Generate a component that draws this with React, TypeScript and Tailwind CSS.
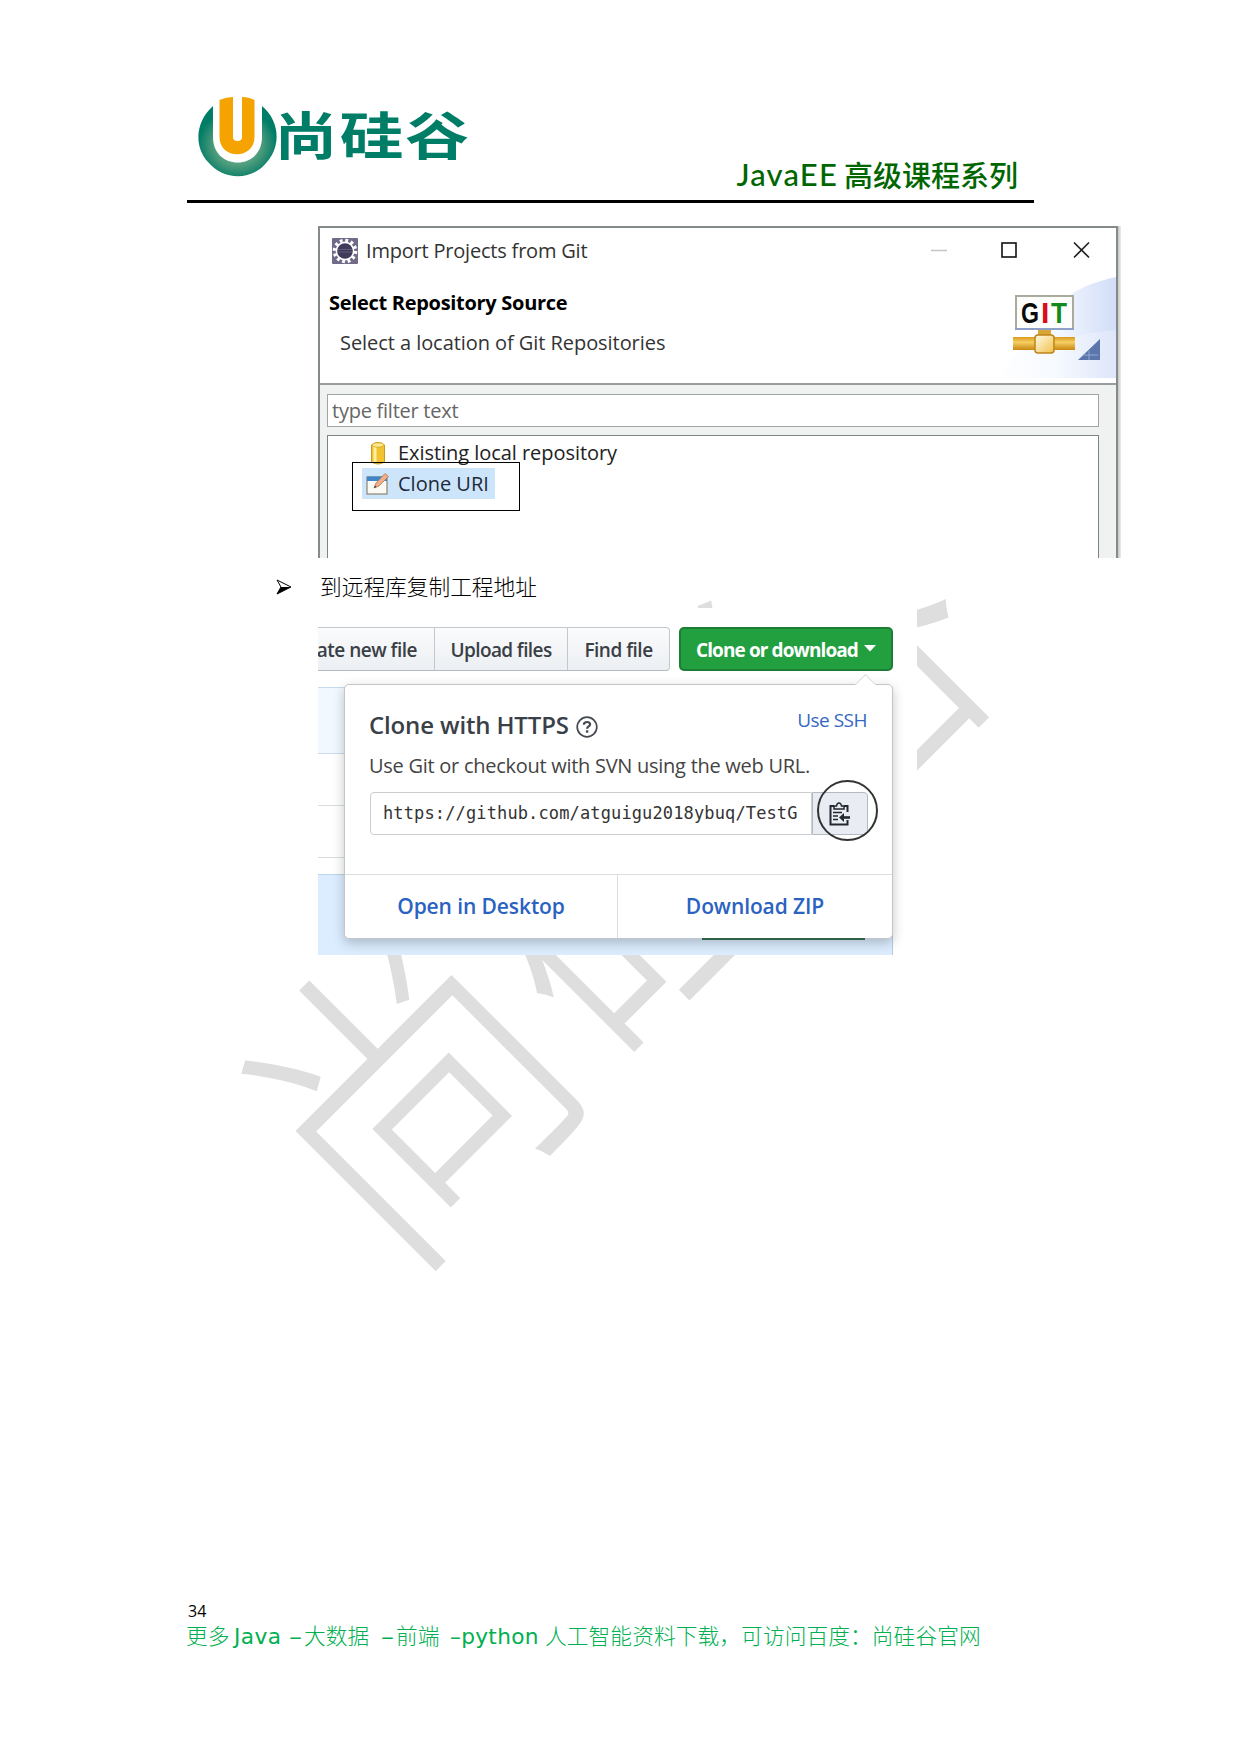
import type { ReactNode } from "react";

function Logo() {
  return (
    <div className="flex items-start">
      <svg className="h-[80px] w-[80px] shrink-0" viewBox="0 0 80 80">
        <defs>
          <radialGradient id="ring" cx="50%" cy="55%" r="50%">
            <stop offset="0.5" stopColor="#5da583" />
            <stop offset="0.7" stopColor="#3d9477" />
            <stop offset="1" stopColor="#007d67" />
          </radialGradient>
        </defs>
        <path
          d="M15 9 C-3 25 -4 50 10 65 C26 84 54 84 69 65 C83 49 82 24 64 9 V40 C64 74 15 74 15 40 Z"
          fill="url(#ring)"
        />
        <path
          d="M21.500 3 Q28 0 35 0 V40 Q35 44 39.500 44 Q44 44 44 40 V0 Q51 0 56.500 3 V40 C56.500 63 21.500 63 21.500 40 Z"
          fill="#f5a300"
        />
      </svg>
      <span className="-ml-[4px] -mt-[4px] origin-left scale-x-[1.25] whitespace-nowrap font-['Noto_Sans_CJK_SC',sans-serif] text-[51px] font-bold leading-[80px] tracking-[1.5px] text-[#007d67]">
        尚硅谷
      </span>
    </div>
  );
}

function EclipseIcon() {
  return (
    <svg className="h-[26px] w-[26px] shrink-0" viewBox="0 0 26 26">
      <rect width="26" height="26" rx="1" fill="#716a88" />
      <circle cx="13" cy="13" r="10.300" fill="none" stroke="#fff" strokeWidth="4" strokeDasharray="2.700 2.693" />
      <circle cx="13" cy="13" r="9.400" fill="#fff" />
      <circle cx="13" cy="13" r="7.800" fill="#403b5a" />
      <path d="M6 11.500h14M5.800 14h14.400" stroke="#625b7c" strokeWidth="1" />
    </svg>
  );
}

function GitBanner() {
  return (
    <svg className="h-[104px] w-[118px]" viewBox="0 0 118 104">
      <defs>
        <linearGradient id="sky" x1="0" y1="0" x2="1" y2="0">
          <stop offset="0" stopColor="#fff" />
          <stop offset="0.500" stopColor="#f3f7fe" />
          <stop offset="1" stopColor="#d2def8" />
        </linearGradient>
        <linearGradient id="pipe" x1="0" y1="0" x2="0" y2="1">
          <stop offset="0" stopColor="#d99a1e" />
          <stop offset="0.400" stopColor="#f6cf63" />
          <stop offset="1" stopColor="#c98712" />
        </linearGradient>
        <linearGradient id="knob" x1="0" y1="0" x2="1" y2="1">
          <stop offset="0" stopColor="#fffbe8" />
          <stop offset="1" stopColor="#f0c04a" />
        </linearGradient>
      </defs>
      <path d="M118 2 C82 10 62 22 56 42 L0 98 V103 H118 Z" fill="url(#sky)" />
      <path d="M118 55 C90 58 55 62 0 86 V103 H118 Z" fill="#fff" opacity="0.250" />
      <g transform="translate(1 -3)">
        <rect x="17" y="24" width="57" height="33" fill="#fdfefc" stroke="#a9ab9d" strokeWidth="2" />
        <path d="M16 57h59" stroke="#8ea0c8" strokeWidth="2" />
        <text x="22" y="51" className="font-['Liberation_Sans'] text-[30px] font-bold" textLength="18" lengthAdjust="spacingAndGlyphs" fill="#0a0a0a">G</text>
        <text x="42" y="51" className="font-['Liberation_Sans'] text-[30px] font-bold" fill="#d90d1e">I</text>
        <text x="52" y="51" className="font-['Liberation_Sans'] text-[30px] font-bold" textLength="16" lengthAdjust="spacingAndGlyphs" fill="#118a1b">T</text>
        <rect x="39" y="58" width="13" height="6" fill="#d9a535" />
        <rect x="14" y="65" width="62" height="13" fill="url(#pipe)" />
        <rect x="36" y="63" width="19" height="18" rx="3" fill="url(#knob)" stroke="#bd8418" strokeWidth="1.500" />
        <path d="M79 88 L101 67 V88 Z" fill="#5a76ad" />
        <path d="M90 88 V79M84 83h15" stroke="#93a8d0" strokeWidth="1" />
      </g>
    </svg>
  );
}

function RepoIcon() {
  return (
    <svg className="h-[24px] w-[16px]" viewBox="0 0 16 24">
      <path d="M1.500 4 Q8 -1 14.500 4 V21 Q8 25 1.500 21 Z" fill="#f2c230" stroke="#c99a1c" />
      <path d="M5 5v17" stroke="#fff0a0" strokeWidth="3" />
      <ellipse cx="8" cy="4" rx="6" ry="2.200" fill="#ffe88a" stroke="#d0a126" strokeWidth="0.800" />
    </svg>
  );
}

function CloneIcon() {
  return (
    <svg className="h-[24px] w-[24px]" viewBox="0 0 24 24">
      <rect x="1" y="5" width="20" height="17" fill="#fbfaf5" stroke="#8a8672" strokeWidth="1.200" />
      <rect x="1" y="4.500" width="20" height="4.500" fill="#3f86c8" />
      <path d="M8 16 L10 11 L19 1.500 L22.500 4.500 L13 14 Z" fill="#eeb08a" stroke="#b8744c" strokeWidth="0.800" />
      <path d="M8 16l1-2.500 1.700 1.500z" fill="#444" />
    </svg>
  );
}

function ImportDialog() {
  return (
    <div className="ml-[318px] h-[332px] w-[803px] overflow-hidden bg-white font-['Open_Sans',sans-serif] text-[#333]">
      <div className="flex h-[332px]">
        <div className="relative w-[800px] border-x-2 border-t-2 border-[#858a8b] bg-[#f0f1f1]">
          <div className="relative h-[157px] border-b-2 border-[#999d9e] bg-white">
            <div className="absolute bottom-[4px] right-0">
              <GitBanner />
            </div>
            <div className="flex h-[45px] items-center pl-[12px]">
              <EclipseIcon />
              <span className="ml-[8px] text-[20px] tracking-[-0.2px]">Import Projects from Git</span>
              <svg className="absolute right-[26px] top-[13px] h-[18px] w-[160px]" viewBox="0 0 160 18">
                <path d="M1 9.500h16" stroke="#c4c4c4" strokeWidth="1.500" />
                <rect x="72" y="2" width="14" height="14" fill="none" stroke="#111" strokeWidth="1.600" />
                <path d="M144 1.500l15 15m0-15l-15 15" stroke="#222" strokeWidth="1.700" />
              </svg>
            </div>
            <div className="pl-[9px] pt-[15px] text-[20px] font-bold leading-[30px] tracking-[-0.3px] text-black">
              Select Repository Source
            </div>
            <div className="pl-[20px] pt-[10px] text-[20px] leading-[30px] tracking-[-0.06px]">
              Select a location of Git Repositories
            </div>
          </div>
          <div className="ml-[7px] mt-[9px] flex h-[33px] w-[772px] items-center border-[1.5px] border-[#a0a4a5] bg-white pl-[4px] text-[20px] tracking-[-0.25px] text-[#666]">
            type filter text
          </div>
          <div className="relative ml-[7px] mt-[8px] h-[130px] w-[772px] border-[1.5px] border-[#7d8284] bg-white pt-[1px]">
            <div className="flex h-[31px] items-center pl-[42px]">
              <RepoIcon />
              <span className="ml-[12px] text-[20px] tracking-[-0.05px] text-[#222]">Existing local repository</span>
            </div>
            <div className="ml-[34px] flex h-[31px] w-[133px] items-center bg-[#cde5fb] pl-[4px]">
              <CloneIcon />
              <span className="ml-[8px] text-[20px] text-[#1e2a38]">Clone URI</span>
            </div>
            <div className="absolute left-[24px] top-[26px] h-[49px] w-[168px] border-[1.5px] border-black" />
          </div>
        </div>
        <div className="w-[3px] bg-gradient-to-r from-[#c4c6c6] to-[#ececec]" />
      </div>
    </div>
  );
}

function ToolButton({ children, className }: { children: ReactNode; className: string }) {
  return (
    <div
      className={
        "flex h-[44px] items-center justify-center overflow-hidden whitespace-nowrap border-y border-r border-[#c5c8cb] border-b-[#b5b9bd] bg-gradient-to-b from-[#fafbfc] to-[#eceff3] pt-[2px] text-[19px] font-semibold text-[#3a3f45] " +
        className
      }
    >
      {children}
    </div>
  );
}

function ClonePanel() {
  return (
    <div className="ml-[318px] h-[347px] w-[599px] bg-white pt-[19px] font-['Open_Sans',sans-serif]">
      <div className="flex w-[575px]">
        <ToolButton className="w-[117px] justify-end pr-[17px] tracking-[-0.5px]">ate new file</ToolButton>
        <ToolButton className="w-[133px] tracking-[-0.6px]">Upload files</ToolButton>
        <ToolButton className="w-[102px] rounded-r-[4px] tracking-[-0.5px]">Find file</ToolButton>
        <div className="ml-[9px] flex h-[44px] w-[214px] items-center rounded-[5px] border-2 border-[#1d7d35] bg-[#22a03f] pl-[15px] pt-[2px] text-[19px] font-bold tracking-[-0.9px] text-white">
          Clone or download
          <svg className="-mt-[3px] ml-[6px] h-[7px] w-[12px]" viewBox="0 0 12 7">
            <path d="M0 0h12l-6 6.500z" fill="#fff" />
          </svg>
        </div>
      </div>
      <div className="relative mt-[16px] h-[268px] w-[575px] overflow-hidden border-r border-[#b9cbdc]">
        <div className="h-[67px] border-y border-[#c8dcf0] bg-[#f1f8ff]" />
        <div className="h-[52px] border-b border-[#d9dcdf]" />
        <div className="h-[52px] border-b border-[#d9dcdf]" />
        <div className="mt-[16px] h-[81px] border-t border-[#bcd3e8] bg-[#dbedff]" />
      </div>
      <div className="relative -mt-[271px] ml-[26px] h-[255px] w-[549px] rounded-[5px] border border-[#c2c5c9] bg-white shadow-[0_4px_12px_rgba(27,31,35,0.25)]">
        <div className="absolute right-[19px] top-[-8px] h-[15px] w-[15px] rotate-45 border-l border-t border-[#d8dadd] bg-white" />
        <div className="absolute bottom-[-2px] right-[27px] h-[2px] w-[163px] bg-[#2c6146]" />
        <div className="relative h-[189px] pl-[24px] pt-[22px]">
          <div className="flex h-[36px] items-center">
            <span className="text-[24px] font-semibold tracking-[-0.15px] text-[#3a4047]">Clone with HTTPS</span>
            <svg className="ml-[7px] mt-[4px] h-[22px] w-[22px]" viewBox="0 0 22 22" fill="none" stroke="#444a50">
              <circle cx="11" cy="11" r="9.800" strokeWidth="1.700" />
              <path d="M7.800 8.700c.2-3.700 6.600-3.500 6.300-.2-.2 2-3 2-3 4.200" strokeWidth="2.200" />
              <path d="M11.100 14.300v2.400" strokeWidth="2.400" />
            </svg>
            <span className="ml-auto mr-[25px] mt-[-9px] text-[19px] tracking-[-0.5px] text-[#3468c4]">Use SSH</span>
          </div>
          <div className="pt-[9px] text-[20px] leading-[28px] tracking-[-0.27px] text-[#444]">
            Use Git or checkout with SVN using the web URL.
          </div>
          <div className="ml-[1px] mt-[12px] flex h-[43px] w-[498px]">
            <div className="flex flex-1 items-center whitespace-nowrap rounded-l-[4px] border border-[#cbced1] pl-[12px] font-['DejaVu_Sans_Mono',monospace] text-[17px] tracking-[0.13px] text-[#333]">
              https://github.com/atguigu2018ybuq/TestG
            </div>
            <div className="flex w-[56px] items-center rounded-r-[4px] border border-[#b5babf] bg-[#e9edf3] pl-[16px]">
              <svg className="h-[24px] w-[22px]" viewBox="0 0 22 24" fill="none" stroke="#24292e">
                <path d="M5 4H1.500v18.500h17V18M15 4h3.500v6" strokeWidth="2" />
                <path d="M5 7V4h2.500Q8 1 10 1t2.500 3H15v3z" strokeWidth="1.500" />
                <path d="M4 10.500h9M4 14h5M4 17.500h5" strokeWidth="1.600" />
                <path d="M12 15.500h9" strokeWidth="2.600" />
                <path d="M10 15.500l5-4.500v9z" fill="#24292e" stroke="none" />
              </svg>
            </div>
          </div>
          <div className="absolute right-[14px] top-[95px] h-[61px] w-[61px] rounded-full border-2 border-[#333]" />
        </div>
        <div className="flex h-[64px] border-t border-[#dcdfe2] text-[21px] font-semibold tracking-[-0.1px] text-[#2a62c2]">
          <div className="flex w-[273px] items-center justify-center border-r border-[#dcdfe2]">Open in Desktop</div>
          <div className="flex flex-1 items-center justify-center">Download ZIP</div>
        </div>
      </div>
    </div>
  );
}

export default function App() {
  return (
    <div className="relative h-[1754px] w-[1240px] overflow-hidden bg-white">
      <div className="absolute left-[605px] top-[868px] h-0 w-0">
        <div className="flex w-max -translate-x-1/2 -translate-y-1/2 -rotate-45 scale-y-[1.1] font-['Noto_Sans_CJK_SC',sans-serif] text-[295px] font-light leading-none text-[#dedede]">
          尚硅谷
        </div>
      </div>
      <div className="relative">
        <header className="ml-[187px] flex h-[203px] w-[847px] items-end justify-between border-b-[3px] border-black">
          <div className="mb-[23px] ml-[11px]">
            <Logo />
          </div>
          <div className="mb-[4px] mr-[16px] flex items-center whitespace-nowrap leading-[44px] text-[#006600]">
            <span className="font-['Lato',sans-serif] text-[31px] font-medium tracking-[1.2px]">JavaEE</span>
            <span className="ml-[6px] font-['Noto_Sans_CJK_SC',sans-serif] text-[29px] font-medium">高级课程系列</span>
          </div>
        </header>
        <div className="h-[23px]" />
        <ImportDialog />
        <div className="flex h-[50px] items-center pl-[276px] pt-[8px]">
          <svg className="h-[16px] w-[16px]" viewBox="0 0 16 16">
            <path d="M1 1L15 8L1 15L5 8Z" fill="none" stroke="#000" strokeWidth="1" />
            <path d="M5 8H15L1 15Z" fill="#000" />
          </svg>
          <span className="-mt-[2px] ml-[28px] font-['Noto_Sans_CJK_SC',sans-serif] text-[21.7px] font-light text-black">
            到远程库复制工程地址
          </span>
        </div>
        <ClonePanel />
        <footer className="ml-[186px] mt-[645px] whitespace-nowrap">
          <div className="pl-[2px] font-['Open_Sans',sans-serif] text-[16px] leading-[22px] text-black">34</div>
          <div className="flex items-center font-['DejaVu_Sans','Noto_Sans_CJK_SC',sans-serif] text-[21.7px] leading-[30px] text-[#00b050]">
            <span className="w-[48px] font-light">更多</span>
            <span className="w-[55px] tracking-[0.4px]">Java</span>
            <span className="w-[15px] origin-left scale-x-[1.2]">–</span>
            <span className="w-[77px] font-light">大数据</span>
            <span className="w-[15px] origin-left scale-x-[1.2]">–</span>
            <span className="w-[54px] font-light">前端</span>
            <span className="w-[95px] tracking-[0.3px]">–python</span>
            <span className="font-light tracking-[0.1px]">人工智能资料下载，可访问百度：尚硅谷官网</span>
          </div>
        </footer>
      </div>
    </div>
  );
}
